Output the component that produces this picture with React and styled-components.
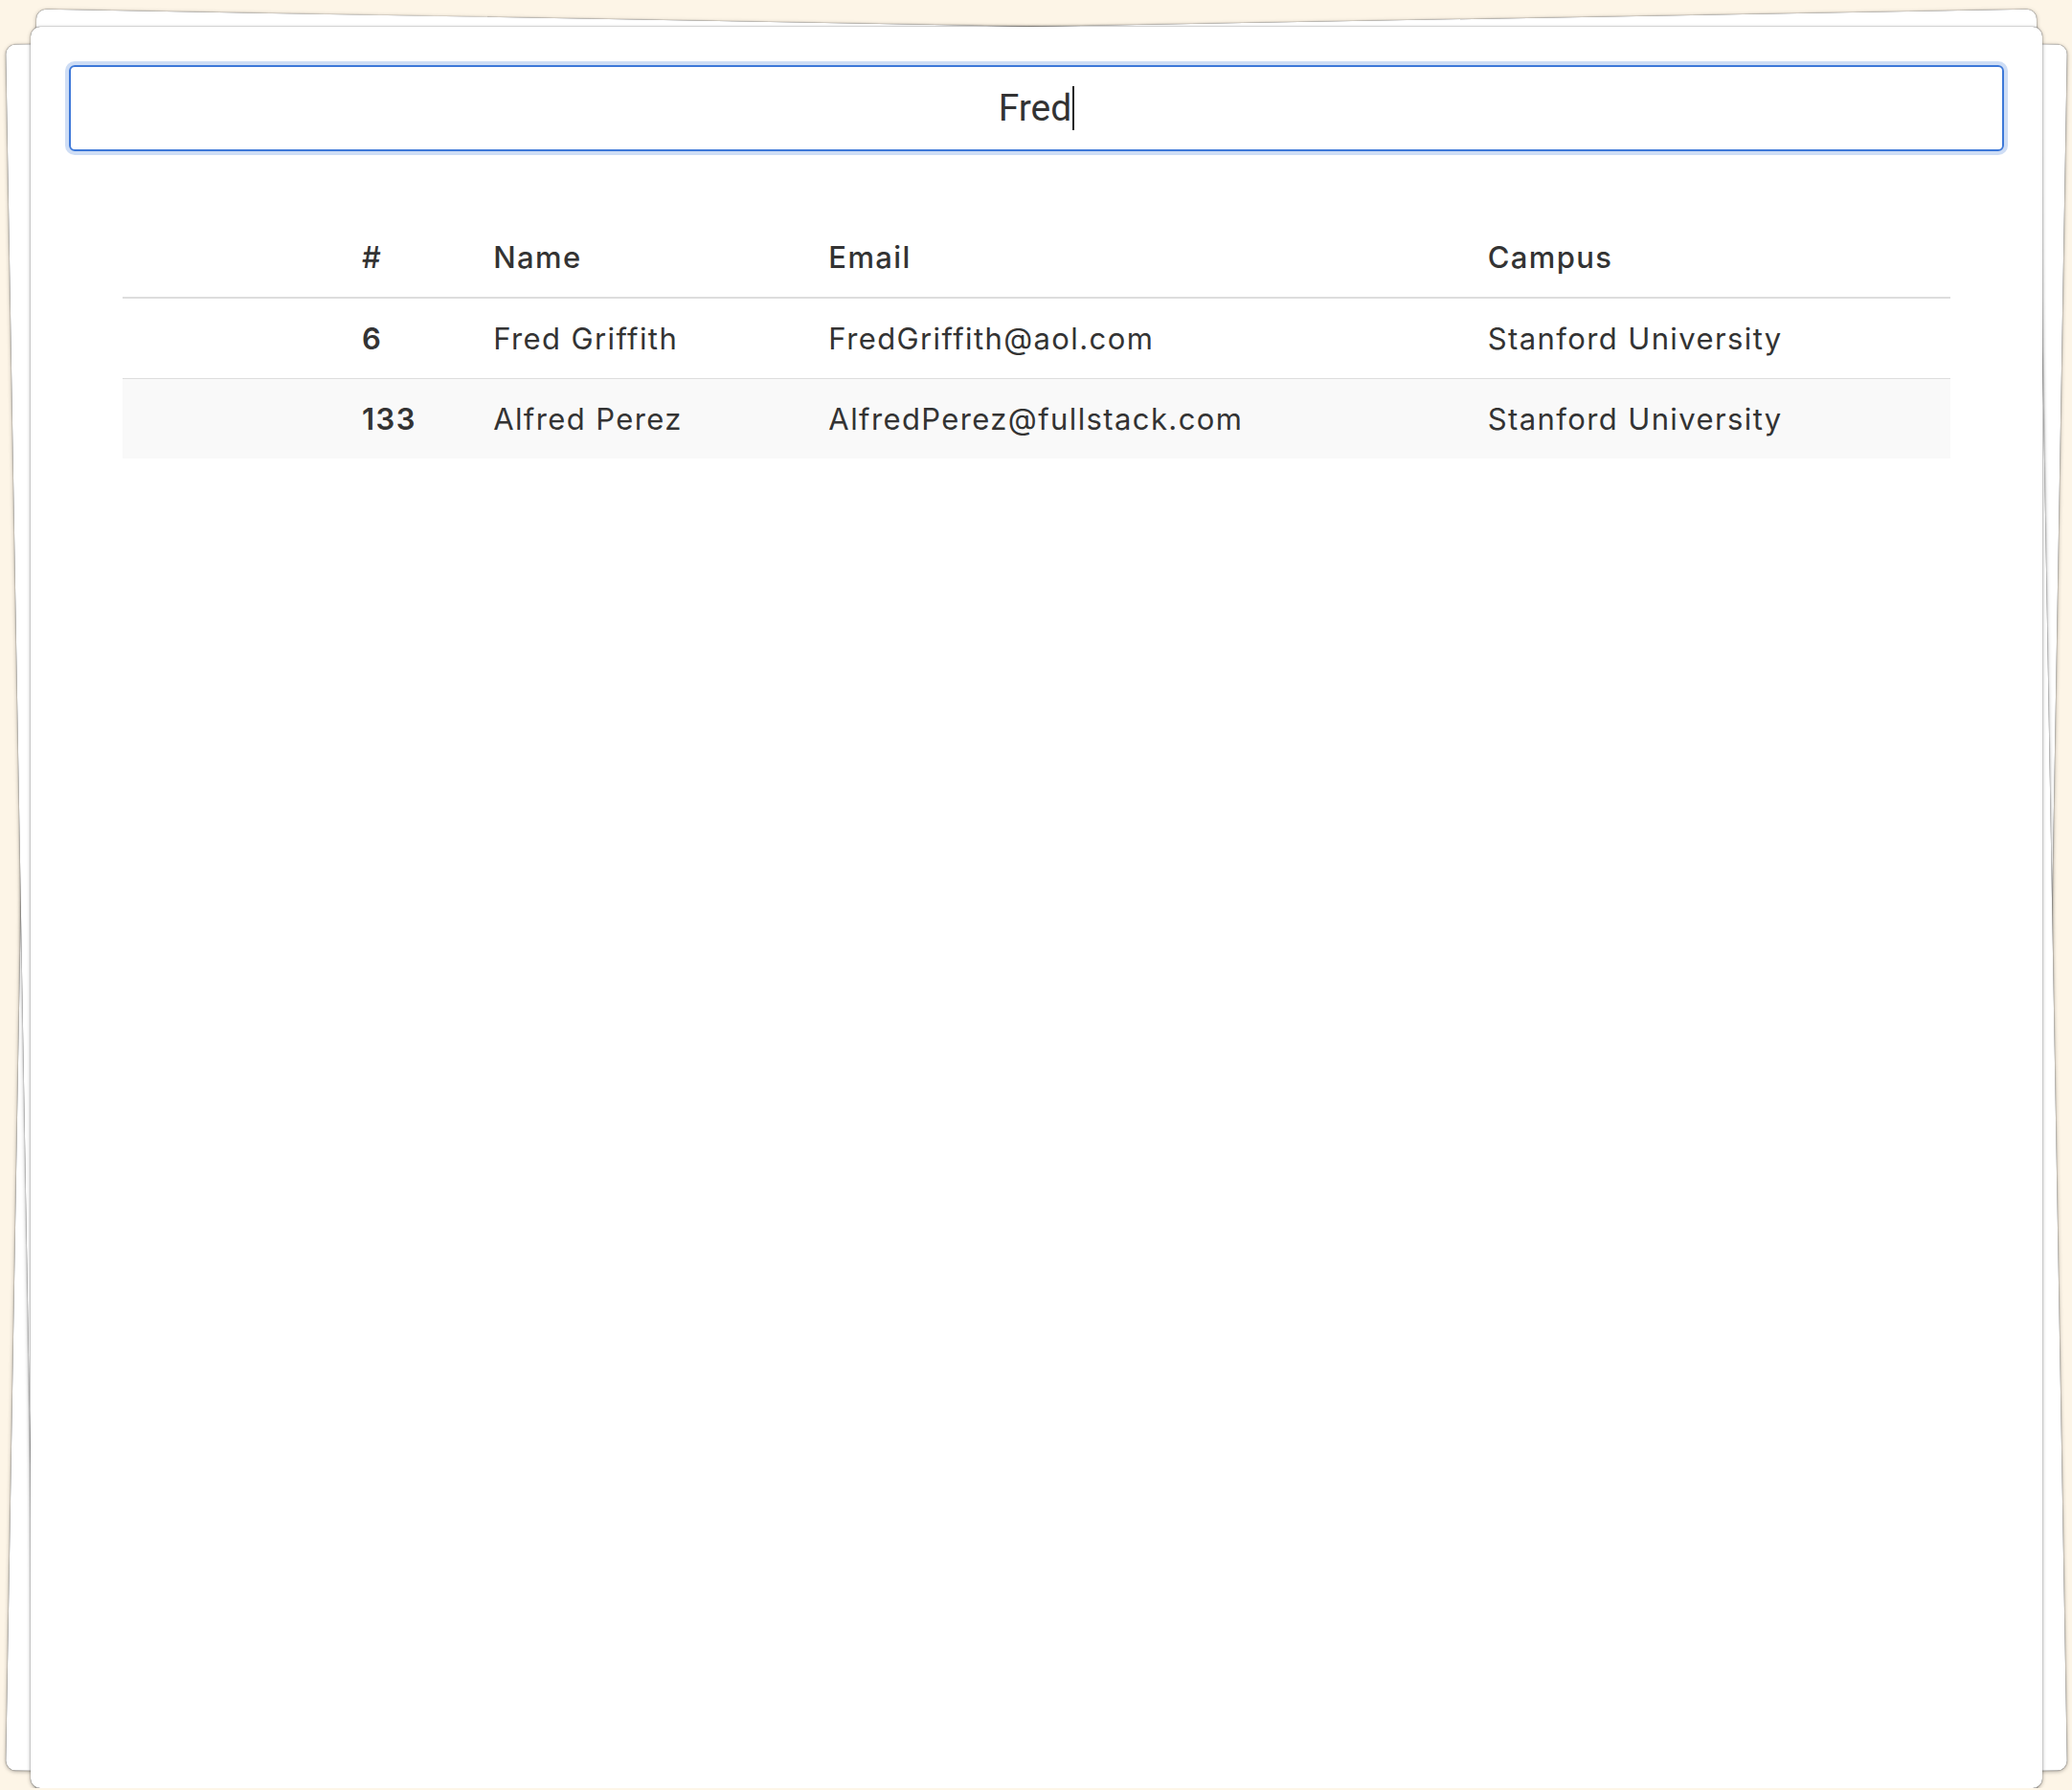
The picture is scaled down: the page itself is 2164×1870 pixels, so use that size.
import styled, { createGlobalStyle } from "styled-components";

const students = [
  { id: 6, name: "Fred Griffith", email: "FredGriffith@aol.com", campus: "Stanford University" },
  { id: 133, name: "Alfred Perez", email: "AlfredPerez@fullstack.com", campus: "Stanford University" },
];

export default function App() {
  return (
    <>
      <GlobalStyle />
      <Stack>
        <Sheet $tilt={1} />
        <Sheet $tilt={-1} />
        <Card>
          <SearchBox>
            <Query>Fred</Query>
            <Caret />
          </SearchBox>
          <Table>
            <colgroup>
              <col style={{ width: 232 }} />
              <col style={{ width: 137 }} />
              <col style={{ width: 350 }} />
              <col style={{ width: 688 }} />
              <col style={{ width: 501 }} />
            </colgroup>
            <thead>
              <tr>
                <Th></Th>
                <Th>#</Th>
                <Th>Name</Th>
                <Th>Email</Th>
                <Th>Campus</Th>
              </tr>
            </thead>
            <tbody>
              {students.map((s, i) => (
                <Row key={s.id} $striped={i % 2 === 1}>
                  <Td></Td>
                  <IdCell>{s.id}</IdCell>
                  <Td>{s.name}</Td>
                  <Td>{s.email}</Td>
                  <Td>{s.campus}</Td>
                </Row>
              ))}
            </tbody>
          </Table>
        </Card>
      </Stack>
    </>
  );
}

// Styles
const GlobalStyle = createGlobalStyle`
  html, body {
    margin: 0;
    padding: 0;
    overflow: hidden;
    background: #fdf5e7;
    font-family: "Inter", "DejaVu Sans", sans-serif;
    color: #333;
  }
`;

const Stack = styled.div`
  position: relative;
  margin: 28px 31px 0 32px;
  height: 1840px;
`;

const Sheet = styled.div`
  position: absolute;
  top: 0;
  bottom: 0;
  left: -10px;
  right: -10px;
  background: #fff;
  border-radius: 10px;
  box-shadow: 0 0 1px rgba(0, 0, 0, 0.85), 0 1px 4px rgba(0, 0, 0, 0.35);
  transform: rotate(${(props) => props.$tilt}deg);
`;

const Card = styled.div`
  position: relative;
  box-sizing: border-box;
  height: 100%;
  padding: 40px;
  background: #fff;
  border-radius: 10px;
  box-shadow: 0 0 1px rgba(0, 0, 0, 0.85), 0 1px 4px rgba(0, 0, 0, 0.35);
`;

const SearchBox = styled.div`
  box-sizing: border-box;
  height: 90px;
  display: flex;
  align-items: center;
  justify-content: center;
  border: 2px solid #3d78d8;
  border-radius: 6px;
  box-shadow: 0 0 0 4px rgba(61, 120, 216, 0.25);
  font-family: "Roboto", "Liberation Sans", sans-serif;
  font-size: 39px;
  color: #333;
`;

const Query = styled.span`
  line-height: 1;
`;

const Caret = styled.span`
  width: 2px;
  height: 46px;
  margin-left: 1px;
  background: #222;
`;

const Table = styled.table`
  margin: 70px 56px 0;
  width: calc(100% - 112px);
  table-layout: fixed;
  border-collapse: collapse;
  font-size: 31px;
  letter-spacing: 0.045em;
  color: #333;
`;

const Th = styled.th`
  text-align: left;
  font-weight: 500;
  padding: 18px;
  line-height: 46px;
  border-bottom: 2px solid #ddd;
`;

const Row = styled.tr`
  background: ${(props) => (props.$striped ? "#f9f9f9" : "#fff")};
  & + & {
    border-top: 1px solid #ddd;
  }
`;

const Td = styled.td`
  padding: 18px;
  line-height: 47px;
  white-space: nowrap;
`;

const IdCell = styled(Td)`
  font-weight: 600;
`;
